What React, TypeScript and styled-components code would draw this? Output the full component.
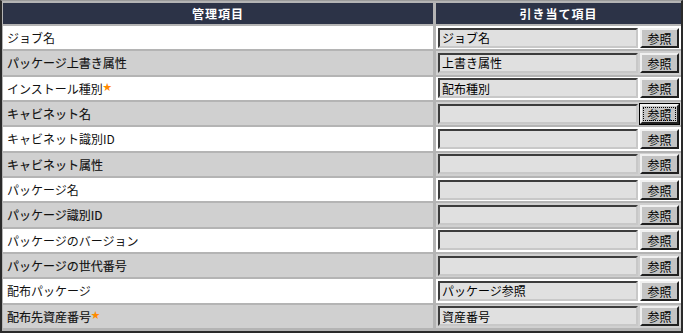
import React from 'react';
import styled, {createGlobalStyle} from 'styled-components';

const GlobalStyle = createGlobalStyle`
  html, body {
    margin: 0;
    padding: 0;
    background: #ffffff;
  }
  body {
    font-family: "Noto Sans CJK JP", "DejaVu Sans", sans-serif;
    font-size: 12px;
  }
`;

const Frame = styled.div`
  box-sizing: border-box;
  width: 683px;
  height: 333px;
  border-top: 1px solid #9a9a9a;
  border-left: 2px solid #2a2a2a;
  border-right: 2px solid #2a2a2a;
  border-bottom: 2px solid #2a2a2a;
  background: #ffffff;
`;

const Grid = styled.div`
  box-sizing: border-box;
  height: 100%;
  display: grid;
  grid-template-columns: 430px 1fr;
  grid-template-rows: 21px repeat(12, 1fr);
  gap: 2px 3px;
  padding: 2px 1px 3px 1px;
  background: #b4b4b4;
`;

const HeadCell = styled.div`
  display: flex;
  align-items: center;
  justify-content: center;
  background: #2c3347;
  color: #ffffff;
  font-weight: bold;
  letter-spacing: 1px;
`;

// shaded rows render a touch heavier than the white ones
const NameCell = styled.div<{$shaded: boolean}>`
  display: flex;
  align-items: center;
  padding-left: 4px;
  background: ${p => (p.$shaded ? '#d0d0d0' : '#ffffff')};
  color: #111111;
  -webkit-text-stroke: ${p => (p.$shaded ? '0.15px #111' : '0')};
  white-space: nowrap;
`;

const Star = styled.span`
  color: #ff8a00;
  font-size: 9px;
  font-weight: bold;
  -webkit-text-stroke: 0;
  align-self: flex-start;
  margin-top: 3px;
`;

const ValueCell = styled.div<{$shaded: boolean}>`
  display: flex;
  align-items: center;
  gap: 2px;
  padding: 0 2px;
  background: ${p => (p.$shaded ? '#d0d0d0' : '#ffffff')};
`;

const Field = styled.div`
  box-sizing: border-box;
  width: 200px;
  height: 20px;
  display: flex;
  align-items: center;
  padding-left: 2px;
  background: #e0e0e0;
  border-style: solid;
  border-width: 2px;
  border-color: #3c3c3c #c8c8c8 #c8c8c8 #3c3c3c;
  color: #000000;
  white-space: nowrap;
  overflow: hidden;
`;

const RefButton = styled.button<{$focused?: boolean}>`
  box-sizing: border-box;
  width: 39px;
  height: 20px;
  padding: 0;
  font: inherit;
  color: #000000;
  background: #c4c4c4;
  border-style: solid;
  border-width: 2px;
  border-color: #f0f0f0 #202020 #202020 #f0f0f0;
  outline: ${p => (p.$focused ? '1px dotted #000' : 'none')};
  outline-offset: -4px;
  box-shadow: ${p => (p.$focused ? '0 0 0 1px #000' : 'none')};
  cursor: pointer;
`;

interface IItem {
  title: string;
  value: string;
  required?: boolean;
}

const items: IItem[] = [
  {title: 'ジョブ名', value: 'ジョブ名'},
  {title: 'パッケージ上書き属性', value: '上書き属性'},
  {title: 'インストール種別', value: '配布種別', required: true},
  {title: 'キャビネット名', value: ''},
  {title: 'キャビネット識別ID', value: ''},
  {title: 'キャビネット属性', value: ''},
  {title: 'パッケージ名', value: ''},
  {title: 'パッケージ識別ID', value: ''},
  {title: 'パッケージのバージョン', value: ''},
  {title: 'パッケージの世代番号', value: ''},
  {title: '配布パッケージ', value: 'パッケージ参照'},
  {title: '配布先資産番号', value: '資産番号', required: true},
];

export default () => {
  return (
    <>
      <GlobalStyle />
      <Frame>
        <Grid>
          <HeadCell>管理項目</HeadCell>
          <HeadCell>引き当て項目</HeadCell>
          {items.map(({title, value, required}, i) => {
            const shaded = i % 2 === 1;
            return (
              <React.Fragment key={title}>
                <NameCell $shaded={shaded}>
                  {title}
                  {required && <Star>★</Star>}
                </NameCell>
                <ValueCell $shaded={shaded}>
                  <Field>{value}</Field>
                  <RefButton $focused={i === 3}>参照</RefButton>
                </ValueCell>
              </React.Fragment>
            );
          })}
        </Grid>
      </Frame>
    </>
  );
};
